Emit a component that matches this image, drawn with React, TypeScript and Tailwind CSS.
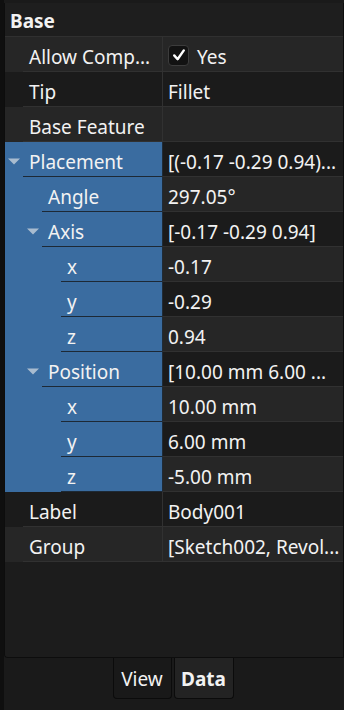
import React from "react";

type Row = {
  name: string;
  value: string;
  level: 0 | 1 | 2;
  expand?: boolean;
  blue?: boolean;
  check?: boolean;
};

const rows: Row[] = [
  { name: "Allow Comp...", value: "Yes", level: 0, check: true },
  { name: "Tip", value: "Fillet", level: 0 },
  { name: "Base Feature", value: "", level: 0 },
  { name: "Placement", value: "[(-0.17 -0.29 0.94)...", level: 0, expand: true, blue: true },
  { name: "Angle", value: "297.05°", level: 1, blue: true },
  { name: "Axis", value: "[-0.17 -0.29 0.94]", level: 1, expand: true, blue: true },
  { name: "x", value: "-0.17", level: 2, blue: true },
  { name: "y", value: "-0.29", level: 2, blue: true },
  { name: "z", value: "0.94", level: 2, blue: true },
  { name: "Position", value: "[10.00 mm 6.00 ...", level: 1, expand: true, blue: true },
  { name: "x", value: "10.00 mm", level: 2, blue: true },
  { name: "y", value: "6.00 mm", level: 2, blue: true },
  { name: "z", value: "-5.00 mm", level: 2, blue: true },
  { name: "Label", value: "Body001", level: 0 },
  { name: "Group", value: "[Sketch002, Revol...", level: 0 },
];

const indentClass = ["w-[18px] pl-[3px]", "w-[37px] pl-[22px]", "w-[56px] pl-[41px]"];

function Triangle() {
  return (
    <svg width="12" height="7" viewBox="0 0 12 7" className="block">
      <polygon points="0,0.5 12,0.5 6,6.5" fill="#a9bccf" />
    </svg>
  );
}

function Check() {
  return (
    <div className="w-[21px] h-[21px] rounded-[4px] bg-[#121212] border border-[#3c3c3c] flex items-center justify-center">
      <svg width="14" height="14" viewBox="0 0 14 14">
        <path d="M2.2 7.4 L5.6 11.2 L11.8 2.4" fill="none" stroke="#ffffff" strokeWidth="2.4" strokeLinecap="round" strokeLinejoin="round" />
      </svg>
    </div>
  );
}

export default function App() {
  return (
    <div
      className="w-[344px] h-[710px] bg-[#141414] flex text-[#f2f2f2] text-[19px] overflow-hidden"
      style={{ fontFamily: '"Noto Sans", "Open Sans", sans-serif' }}
    >
      <div className="w-[4px] h-full bg-[#0f0f0f]" />
      <div className="flex-1 flex flex-col pt-[3px] bg-[#1a1a1a]">
        <div className="h-[655px] flex flex-col bg-[#1c1c1c] border-l border-r border-b border-[#0d0d0d] rounded-bl-[4px] overflow-hidden">
          <div className="h-[34px] shrink-0 flex items-center pl-[5px] pt-[4px] font-bold bg-[#1e1e1e] border-b border-[#303030]">
            Base
          </div>
          {rows.map((r, i) => {
            const light = i % 2 === 0;
            const rowBg = light ? "bg-[#262626]" : "bg-[#1b1b1b]";
            const nameBg = r.blue ? "bg-[#3a6ca0]" : rowBg;
            const lineCol = r.blue ? "border-[#1d2935]" : "border-[#313131]";
            return (
              <div key={i} className="h-[35px] shrink-0 flex">
                <div className={`w-[157px] shrink-0 flex ${nameBg}`}>
                  <div className={`${indentClass[r.level]} shrink-0 flex items-center pt-[4px]`}>
                    {r.expand ? <Triangle /> : null}
                  </div>
                  <div className={`flex-1 min-w-0 flex items-center pl-[6px] pt-[6px] border-b ${lineCol} whitespace-nowrap overflow-hidden`}>
                    {r.name}
                  </div>
                </div>
                <div
                  className={`flex-1 min-w-0 flex items-center pl-[5px] pt-[6px] border-l ${
                    r.blue ? "border-l-[#1f2b37]" : "border-l-[#313131]"
                  } border-b border-b-[#313131] ${rowBg} whitespace-nowrap overflow-hidden`}
                >
                  {r.check ? (
                    <div className="flex items-center gap-[8px]">
                      <div className="-mt-[4px]">
                        <Check />
                      </div>
                      <span>{r.value}</span>
                    </div>
                  ) : (
                    r.value
                  )}
                </div>
              </div>
            );
          })}
          <div className="flex-1 bg-[#1c1c1c]" />
        </div>
        <div className="flex justify-center gap-[2px] -ml-[2px]">
          <div className="w-[59px] h-[41px] flex items-center justify-center pt-[2px] bg-[#191919] border border-t-0 border-[#0b0b0b] rounded-b-[4px]">
            View
          </div>
          <div className="w-[60px] h-[41px] flex items-center justify-center pt-[2px] font-bold bg-[#232323] border border-t-0 border-[#0b0b0b] rounded-b-[4px]">
            Data
          </div>
        </div>
      </div>
    </div>
  );
}
